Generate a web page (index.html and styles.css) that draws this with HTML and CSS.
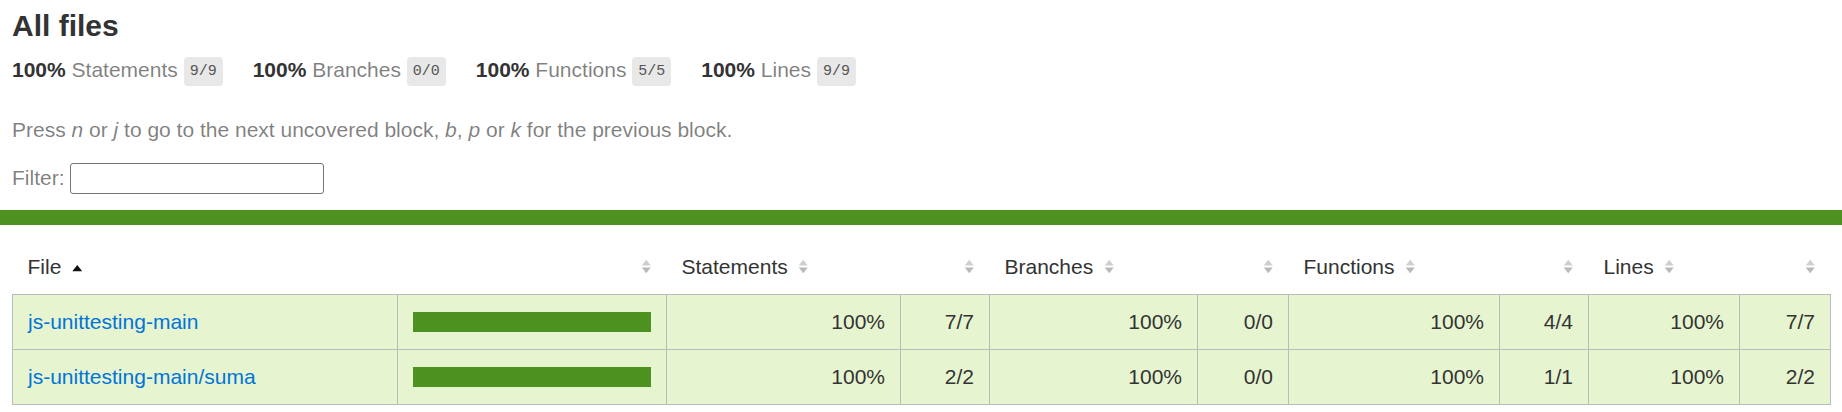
FILE: index.html
```html
<!DOCTYPE html>
<html lang="en">
<head>
<meta charset="utf-8">
<title>Code coverage report for All files</title>
<link rel="stylesheet" href="styles.css">
</head>
<body>
<div class="wrapper">
  <div class="header">
    <h1>All files</h1>
    <div class="summary">
      <div class="metric"><span class="strong">100%</span> <span class="quiet">Statements</span> <span class="fraction">9/9</span></div>
      <div class="metric"><span class="strong">100%</span> <span class="quiet">Branches</span> <span class="fraction">0/0</span></div>
      <div class="metric"><span class="strong">100%</span> <span class="quiet">Functions</span> <span class="fraction">5/5</span></div>
      <div class="metric"><span class="strong">100%</span> <span class="quiet">Lines</span> <span class="fraction">9/9</span></div>
    </div>
    <p class="quiet hint">Press <em>n</em> or <em>j</em> to go to the next uncovered block, <em>b</em>, <em>p</em> or <em>k</em> for the previous block.</p>
    <div class="quiet filter">Filter: <input type="search" class="file-search"></div>
  </div>
  <div class="status-line high"></div>
  <div class="content">
    <table class="coverage-summary">
      <colgroup>
        <col class="c-file"><col class="c-pic">
        <col class="c-spct"><col class="c-sabs">
        <col class="c-bpct"><col class="c-babs">
        <col class="c-fpct"><col class="c-fabs">
        <col class="c-lpct"><col class="c-labs">
      </colgroup>
      <thead>
        <tr>
          <th class="file">File<svg class="sorter" viewBox="0 0 7 10"><polygon points="0.2,8.2 3.5,4 6.8,8.2" fill="#111"/></svg></th>
          <th class="pic"><svg class="sorter" viewBox="0 0 7 10"><polygon points="0.5,4.3 3.5,0.5 6.5,4.3" fill="#cfcfcf"/><polygon points="0.5,5.7 3.5,9.5 6.5,5.7" fill="#b9b9b9"/></svg></th>
          <th class="pct">Statements<svg class="sorter" viewBox="0 0 7 10"><polygon points="0.5,4.3 3.5,0.5 6.5,4.3" fill="#cfcfcf"/><polygon points="0.5,5.7 3.5,9.5 6.5,5.7" fill="#b9b9b9"/></svg></th>
          <th class="abs"><svg class="sorter" viewBox="0 0 7 10"><polygon points="0.5,4.3 3.5,0.5 6.5,4.3" fill="#cfcfcf"/><polygon points="0.5,5.7 3.5,9.5 6.5,5.7" fill="#b9b9b9"/></svg></th>
          <th class="pct">Branches<svg class="sorter" viewBox="0 0 7 10"><polygon points="0.5,4.3 3.5,0.5 6.5,4.3" fill="#cfcfcf"/><polygon points="0.5,5.7 3.5,9.5 6.5,5.7" fill="#b9b9b9"/></svg></th>
          <th class="abs"><svg class="sorter" viewBox="0 0 7 10"><polygon points="0.5,4.3 3.5,0.5 6.5,4.3" fill="#cfcfcf"/><polygon points="0.5,5.7 3.5,9.5 6.5,5.7" fill="#b9b9b9"/></svg></th>
          <th class="pct">Functions<svg class="sorter" viewBox="0 0 7 10"><polygon points="0.5,4.3 3.5,0.5 6.5,4.3" fill="#cfcfcf"/><polygon points="0.5,5.7 3.5,9.5 6.5,5.7" fill="#b9b9b9"/></svg></th>
          <th class="abs"><svg class="sorter" viewBox="0 0 7 10"><polygon points="0.5,4.3 3.5,0.5 6.5,4.3" fill="#cfcfcf"/><polygon points="0.5,5.7 3.5,9.5 6.5,5.7" fill="#b9b9b9"/></svg></th>
          <th class="pct">Lines<svg class="sorter" viewBox="0 0 7 10"><polygon points="0.5,4.3 3.5,0.5 6.5,4.3" fill="#cfcfcf"/><polygon points="0.5,5.7 3.5,9.5 6.5,5.7" fill="#b9b9b9"/></svg></th>
          <th class="abs"><svg class="sorter" viewBox="0 0 7 10"><polygon points="0.5,4.3 3.5,0.5 6.5,4.3" fill="#cfcfcf"/><polygon points="0.5,5.7 3.5,9.5 6.5,5.7" fill="#b9b9b9"/></svg></th>
        </tr>
      </thead>
      <tbody>
        <tr>
          <td class="file high"><a href="#">js-unittesting-main</a></td>
          <td class="pic high"><div class="chart"><div class="cover-fill" style="width: 100%"></div></div></td>
          <td class="pct high">100%</td>
          <td class="abs high">7/7</td>
          <td class="pct high">100%</td>
          <td class="abs high">0/0</td>
          <td class="pct high">100%</td>
          <td class="abs high">4/4</td>
          <td class="pct high">100%</td>
          <td class="abs high">7/7</td>
        </tr>
        <tr>
          <td class="file high"><a href="#">js-unittesting-main/suma</a></td>
          <td class="pic high"><div class="chart"><div class="cover-fill" style="width: 100%"></div></div></td>
          <td class="pct high">100%</td>
          <td class="abs high">2/2</td>
          <td class="pct high">100%</td>
          <td class="abs high">0/0</td>
          <td class="pct high">100%</td>
          <td class="abs high">1/1</td>
          <td class="pct high">100%</td>
          <td class="abs high">2/2</td>
        </tr>
      </tbody>
    </table>
  </div>
</div>
</body>
</html>
```

FILE: styles.css
```css
*, *::before, *::after {
  box-sizing: border-box;
}

html, body {
  margin: 0;
  padding: 0;
}

body {
  font-family: "Liberation Sans", Arial, Helvetica, sans-serif;
  font-size: 21px;
  color: #333;
  background: #fff;
}

a {
  color: #0074d9;
  text-decoration: none;
}

.header {
  padding: 9px 12px 16px;
}

h1 {
  font-size: 30px;
  font-weight: bold;
  margin: 0;
}

.summary {
  display: flex;
  flex-wrap: wrap;
}

.metric {
  padding: 15px 30px 15px 0;
}

.strong {
  font-weight: bold;
}

.quiet {
  color: rgba(0, 0, 0, 0.5);
}

.fraction {
  font-family: "Liberation Mono", "DejaVu Sans Mono", monospace;
  font-size: 15px;
  color: #555;
  background: #e8e8e8;
  padding: 6px 6px;
  border-radius: 4px;
  vertical-align: middle;
}

.hint {
  margin: 21px 0;
}

.filter {
  line-height: normal;
}

.file-search {
  width: 254px;
  height: 31px;
  margin: 0;
  padding: 1px 3px;
  border: 1px solid #767676;
  border-radius: 3px;
  font-family: "Liberation Sans", Arial, sans-serif;
  font-size: 20px;
  background: #fff;
  vertical-align: baseline;
}

.status-line {
  height: 15px;
}

.status-line.high {
  background: rgb(77, 146, 33);
}

.content {
  padding: 15px 12px;
}

.coverage-summary {
  border-collapse: collapse;
  width: 100%;
  table-layout: fixed;
}

.c-file { width: 385px; }
.c-pic { width: 269px; }
.c-spct { width: 234px; }
.c-sabs { width: 89px; }
.c-bpct { width: 208px; }
.c-babs { width: 91px; }
.c-fpct { width: 211px; }
.c-fabs { width: 89px; }
.c-lpct { width: 151px; }
.c-labs { width: 91px; }

.coverage-summary tr {
  border-bottom: 1px solid #bbb;
}

.coverage-summary tbody {
  border: 1px solid #bbb;
}

.coverage-summary th,
.coverage-summary td {
  padding: 15px;
}

.coverage-summary td {
  border-right: 1px solid #bbb;
}

.coverage-summary td:last-child {
  border-right: none;
}

.coverage-summary th {
  text-align: left;
  font-weight: normal;
  white-space: nowrap;
}

.coverage-summary th.pic,
.coverage-summary th.abs,
.coverage-summary td.pct,
.coverage-summary td.abs {
  text-align: right;
}

.coverage-summary td.file {
  white-space: nowrap;
}

.sorter {
  display: inline-block;
  width: 10.5px;
  height: 15px;
  margin-left: 10.5px;
  vertical-align: baseline;
}

.high {
  background: rgb(230, 245, 208);
}

.chart {
  line-height: 0;
  border: 1px solid rgb(77, 146, 33);
}

.cover-fill {
  display: block;
  height: 18px;
  background: rgb(77, 146, 33);
}
```
